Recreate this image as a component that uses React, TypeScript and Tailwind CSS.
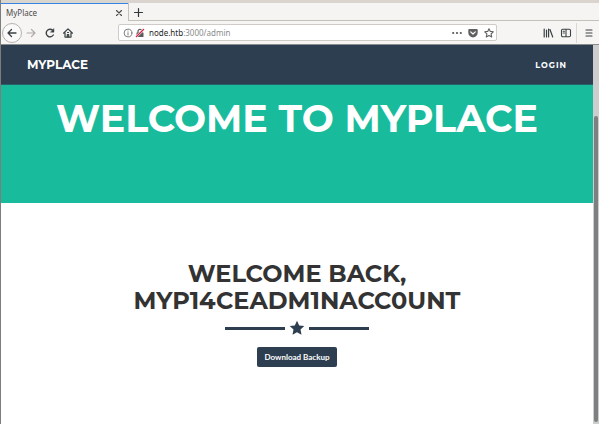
import type { ReactNode } from 'react';

function IconButton({ label, className = '', children }: { label: string; className?: string; children: ReactNode }) {
  return (
    <button type="button" aria-label={label} className={`flex shrink-0 items-center justify-center ${className}`}>
      {children}
    </button>
  );
}

const line = { fill: 'none', stroke: 'currentColor', strokeLinecap: 'round', strokeLinejoin: 'round' } as const;

function TabStrip() {
  return (
    <div className="flex h-[18px] bg-[#f5f4f2]">
      <div className="flex w-32 flex-col border-r border-[#c4c1bc] bg-[#f5f4f2]">
        <div className="h-px bg-[#3584e4]" />
        <div className="flex flex-1 items-center justify-between pr-[3px] pl-[5px]">
          <span className="text-[8px] leading-3 text-[#4a4a4a]">MyPlace</span>
          <IconButton label="Close tab" className="size-3 text-[#4a4a4a]">
            <svg viewBox="0 0 12 12" className="size-3" {...line} strokeWidth="1.1">
              <path d="M3.500 3.500l5 5M8.500 3.500l-5 5" />
            </svg>
          </IconButton>
        </div>
      </div>
      <div className="flex flex-1 items-center border-b border-[#c4c1bc] pl-[3px]">
        <IconButton label="New tab" className="size-3 text-[#33383a]">
          <svg viewBox="0 0 12 12" className="size-3" {...line} strokeWidth="1.200">
            <path d="M6.500 2.500v8M2.500 6.500h8" />
          </svg>
        </IconButton>
      </div>
    </div>
  );
}

function Toolbar() {
  return (
    <div className="flex h-[23px] items-center bg-[#f6f5f4] text-[#3c4143]">
      <IconButton label="Back" className="ml-px size-5 rounded-full border border-[#b5b2ae] bg-[#fbfafa]">
        <svg viewBox="0 0 12 12" className="size-3" {...line} strokeWidth="1.300">
          <path d="M10 6H2M5.500 2.500L2 6l3.500 3.500" />
        </svg>
      </IconButton>
      <IconButton label="Forward" className="ml-[3px] size-3 text-[#aeacaa]">
        <svg viewBox="0 0 12 12" className="size-3" {...line} strokeWidth="1.200">
          <path d="M2 6h8M6.500 2.500L10 6 6.500 9.500" />
        </svg>
      </IconButton>
      <IconButton label="Reload" className="ml-[7px] size-3">
        <svg viewBox="0 0 12 12" className="size-3" {...line} strokeWidth="1.400">
          <path d="M9.300 8A3.800 3.800 0 1 1 8.700 3.300" />
          <path d="M10 1.800v3.400H6.600z" fill="currentColor" strokeWidth="0.400" />
        </svg>
      </IconButton>
      <IconButton label="Home" className="ml-[6px] size-3">
        <svg viewBox="0 0 12 12" className="size-3" {...line} strokeWidth="1.200">
          <path d="M1.500 6.200L6 1.900l4.500 4.300M3 5.800v4.300h6V5.800" />
          <path d="M5.300 10V7.500h1.400V10M5.500 5.500h1" />
        </svg>
      </IconButton>

      <div className="ml-11 flex h-[17px] min-w-0 flex-1 items-center rounded-xs border border-[#cfccc8] bg-white pr-px pl-1">
        <svg viewBox="0 0 10 10" className="size-[10px] shrink-0 text-[#707070]" {...line} strokeWidth="0.900">
          <circle cx="5" cy="5" r="3.900" />
          <path d="M5 4.700v2.300M5 3v.1" />
        </svg>
        <svg viewBox="0 0 10 10" className="ml-[2px] size-[10px] shrink-0" fill="none">
          <path d="M3 5V3.400a2 2 0 0 1 4 0V5" stroke="#5c5c5c" strokeWidth="1.200" />
          <rect x="1.500" y="4.500" width="7" height="4.500" rx="0.500" fill="#5c5c5c" />
          <path d="M1 9L9 1" stroke="#fff" strokeWidth="2.400" />
          <path d="M1 9L9 1" stroke="#d7264b" strokeWidth="1.300" />
        </svg>
        <div className="ml-1 flex-1 truncate text-[8px] leading-3 text-[#8b8b8b]">
          <span className="text-[#252525]">node.htb</span>:3000/admin
        </div>
        <IconButton label="Page actions" className="size-3 text-[#555]">
          <svg viewBox="0 0 12 12" className="size-3" fill="currentColor">
            <circle cx="2.200" cy="6" r="1.100" />
            <circle cx="6" cy="6" r="1.100" />
            <circle cx="9.800" cy="6" r="1.100" />
          </svg>
        </IconButton>
        <IconButton label="Save to Pocket" className="ml-1 size-3 text-[#606060]">
          <svg viewBox="0 0 12 12" className="size-3">
            <path d="M2.200 2h7.600q.9 0 .9.900v2.800a4.700 4.700 0 0 1-9.400 0V2.900q0-.9.900-.9z" fill="currentColor" />
            <path d="M3.700 4.900L6 7l2.300-2.100" {...line} stroke="#fff" strokeWidth="1.200" />
          </svg>
        </IconButton>
        <IconButton label="Bookmark this page" className="ml-1 size-3 text-[#606060]">
          <svg viewBox="0 0 12 12" className="size-3" {...line} strokeWidth="1.100">
            <path d="M6 1.700l1.300 2.700 3 .4-2.200 2.100.6 3L6 8.500 3.300 9.900l.6-3L1.700 4.800l3-.4z" />
          </svg>
        </IconButton>
      </div>

      <IconButton label="Library" className="ml-[45px] size-3">
        <svg viewBox="0 0 12 12" className="size-3" {...line} strokeWidth="1.200">
          <path d="M2.200 2v8M4.500 3v7M6.600 2v8M8 2.500L10.700 10" />
        </svg>
      </IconButton>
      <IconButton label="Sidebars" className="ml-[6px] size-3">
        <svg viewBox="0 0 12 12" className="size-3" {...line} strokeWidth="1.100">
          <rect x="1.500" y="2.200" width="9" height="7.600" rx="1.200" />
          <path d="M6 2.500v7M3.200 4.300h1.200M3.200 6h1.200" />
        </svg>
      </IconButton>
      <div className="ml-1 h-5 w-px bg-[#dad8d5]" />
      <IconButton label="Open menu" className="mr-1 ml-[6px] size-3">
        <svg viewBox="0 0 12 12" className="size-3" {...line} strokeWidth="1.100">
          <path d="M3 3h6M3 6h6M3 9h6" />
        </svg>
      </IconButton>
    </div>
  );
}

function StarDivider() {
  return (
    <div className="mt-[6px] flex items-center justify-center gap-1 text-[#2c3e50]">
      <div className="h-[3px] w-[60px] bg-current" />
      <svg viewBox="0 0 16 16" className="size-4" fill="currentColor">
        <path d="M8 .7l2.200 4.700 5.100.6-3.800 3.500 1 5.200L8 12.200l-4.500 2.500 1-5.200L.7 6l5.100-.6z" />
      </svg>
      <div className="h-[3px] w-[60px] bg-current" />
    </div>
  );
}

export default function App() {
  return (
    <div className="flex min-h-screen flex-col border-l border-[#7d7d7d] bg-white font-['Noto_Sans',sans-serif]">
      <div className="h-[3px] bg-[#d9d5ce]" />
      <TabStrip />
      <Toolbar />
      <div className="flex flex-1 border-t border-[#8a8c8e]">
        <div className="flex-1 font-['Montserrat',Inter,sans-serif]">
          <nav className="flex h-10 items-center justify-between border-b border-[#285f68] bg-[#2c3e50] px-[26px] font-bold text-white">
            <a href="#top" className="text-[12px] leading-4">MYPLACE</a>
            <a href="#login" className="text-[8px] leading-4 tracking-[1px]">LOGIN</a>
          </nav>
          <header className="h-[118px] bg-[#18bc9c] pt-3 text-center text-white">
            <h1 className="text-[38px] leading-[44px] font-bold whitespace-nowrap">WELCOME TO MYPLACE</h1>
          </header>
          <main className="px-8 pt-[57px] pb-14 text-center">
            <h2 className="text-[24px] leading-[27px] font-bold text-[#333]">
              WELCOME BACK,
              <br />
              MYP14CEADM1NACC0UNT
            </h2>
            <StarDivider />
            <button
              type="button"
              className="mt-[11px] h-5 rounded-xs bg-[#2c3e50] px-[7px] font-['Lato',sans-serif] text-[8px] leading-3 font-bold text-white"
            >
              Download Backup
            </button>
          </main>
        </div>
        <div className="flex w-[6px] flex-col items-center bg-[#cdcdcd] pt-[71px] pb-[2px]">
          <div className="w-1 flex-1 rounded-full bg-[#7d8080]" />
        </div>
      </div>
    </div>
  );
}
